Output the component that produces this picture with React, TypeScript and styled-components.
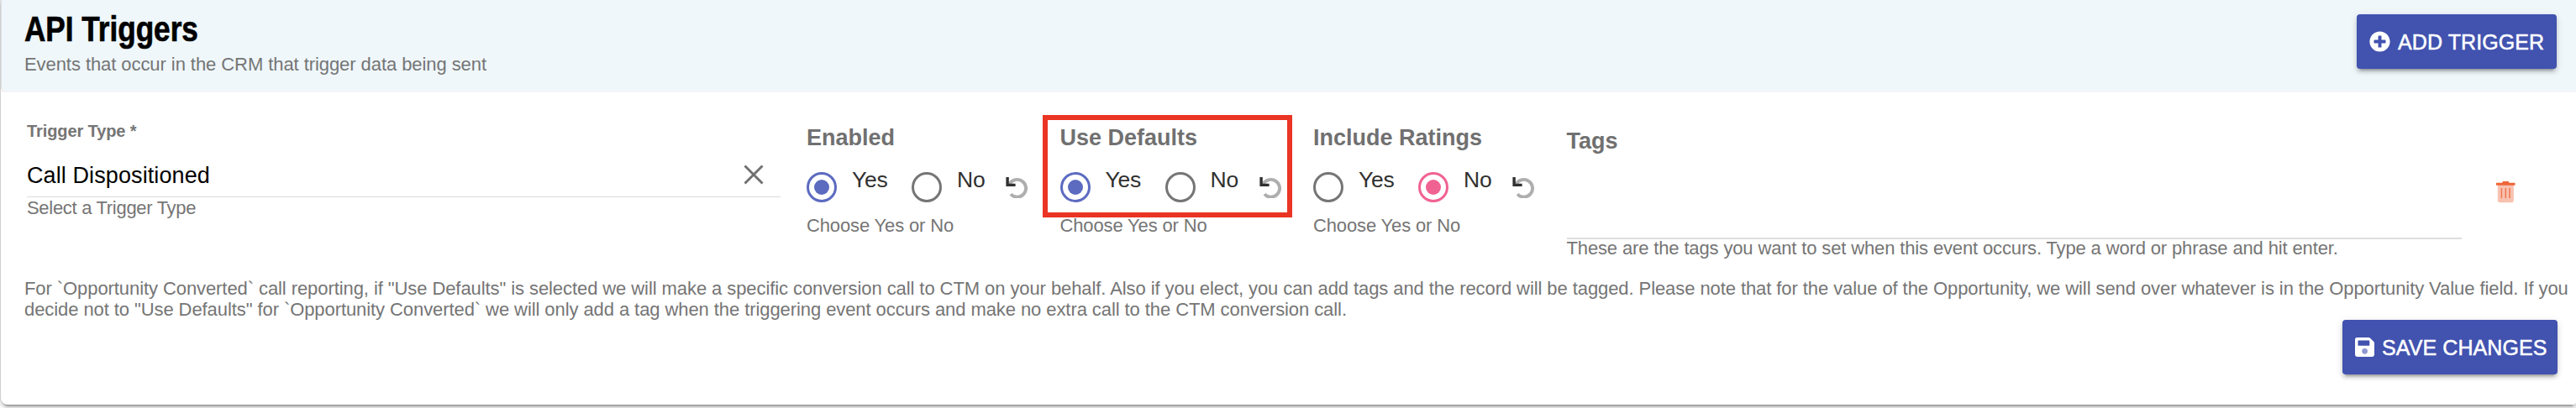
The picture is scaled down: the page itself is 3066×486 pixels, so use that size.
import React from "react";
import styled, { createGlobalStyle } from "styled-components";
import { FaPlusCircle } from "react-icons/fa";

const GlobalStyle = createGlobalStyle`
  *, *::before, *::after { box-sizing: border-box; }
  body {
    margin: 0;
    background: #fff;
    font-family: "Liberation Sans", Arial, sans-serif;
    color: #212121;
    overflow: hidden;
  }
`;

const raised = `
  0 6px 2px -4px rgba(0, 0, 0, 0.2),
  0 4px 4px 0 rgba(0, 0, 0, 0.14),
  0 2px 10px 0 rgba(0, 0, 0, 0.12)`;

const Page = styled.main`
  height: 486px;
  overflow: hidden;
  padding-left: 1px;
`;

const Card = styled.section`
  height: 482px;
  background: #fff;
  border-radius: 0 0 3px 8px;
  box-shadow: ${raised}, 0 0 0 1px rgba(0, 0, 0, 0.09);
`;

const Header = styled.header`
  height: 110px;
  margin-left: 1px;
  padding: 0 23px 0 27px;
  display: flex;
  justify-content: space-between;
  align-items: flex-start;
  background: #eff7fb;
  border-bottom: 2px solid #f7f5f9;
  border-bottom-left-radius: 6px;
  box-shadow: -1px 0 0 #dedee0;
`;

const Title = styled.h1`
  margin: 11px 0 0;
  font-size: 42px;
  line-height: 48px;
  font-weight: 700;
  color: #000;
  -webkit-text-stroke: 0.7px #000;
  transform: scaleX(0.836);
  transform-origin: left center;
`;

const Subtitle = styled.p`
  margin: 5px 0 0;
  font-size: 22px;
  line-height: 25px;
  letter-spacing: -0.07px;
  color: #757575;
`;

const Button = styled.button<{ $width: number }>`
  width: ${(p) => p.$width}px;
  height: 65px;
  padding: 0 0 0 14.5px;
  display: flex;
  align-items: center;
  gap: 9.5px;
  border: 0;
  border-radius: 4px;
  background: #4152af;
  color: #fff;
  font: 400 25px/30px "Liberation Sans", Arial, sans-serif;
  letter-spacing: 0.1px;
  white-space: nowrap;
  -webkit-text-stroke: 0.5px #fff;
  box-shadow: ${raised};

  svg { flex: none; }
  span { padding-top: 1px; }
`;

const AddButton = styled(Button)`
  margin-top: 17px;
`;

const Fields = styled.div`
  height: 221px;
  display: flex;
  align-items: flex-start;
  padding-left: 31px;
`;

const TriggerField = styled.div`
  width: 897px;
  margin: 34px 31px 0 0;
`;

const SmallLabel = styled.div`
  font-size: 20px;
  line-height: 24px;
  font-weight: 700;
  letter-spacing: -0.1px;
  color: #757575;
`;

const SelectBox = styled.div`
  height: 42px;
  margin-top: 25px;
  padding-right: 20px;
  display: flex;
  justify-content: space-between;
  border-bottom: 1px solid #dcdcdc;
  font-size: 27px;
  line-height: 32px;
  letter-spacing: 0.1px;
  color: #000;

  svg { margin-top: 3px; }
`;

const Helper = styled.div<{ $tight?: number }>`
  font-size: 22px;
  line-height: 25px;
  letter-spacing: ${(p) => p.$tight ?? -0.14}px;
  color: #757575;
  white-space: nowrap;
`;

const RadioField = styled.div`
  position: relative;
  width: 301.5px;
  margin-top: 38px;
`;

const FieldLabel = styled.div`
  font-size: 27px;
  line-height: 32px;
  font-weight: 700;
  color: #707070;
`;

const RadioRow = styled.div`
  height: 58px;
  margin-top: 18px;
  display: flex;
  align-items: flex-start;
`;

const Option = styled.label`
  width: 125px;
  display: flex;
  gap: 18px;
  font-size: 26.5px;
  line-height: 32px;
  letter-spacing: -0.2px;
  color: #303030;
`;

const Radio = styled.span<{ $color: string; $on: boolean }>`
  width: 36px;
  height: 36px;
  margin-top: 7px;
  flex: none;
  display: grid;
  place-items: center;
  border: 3.5px solid ${(p) => (p.$on ? p.$color : "#757575")};
  border-radius: 50%;

  &::after {
    content: "";
    width: 18px;
    height: 18px;
    border-radius: 50%;
    background: ${(p) => (p.$on ? p.$color : "transparent")};
  }
`;

const UndoIcon = styled.svg`
  margin: 13px 0 0 -13px;
`;

const Highlight = styled.div`
  position: absolute;
  left: -21px;
  top: -11px;
  width: 297px;
  height: 122px;
  border: 6px solid #ea3424;
`;

const TagsField = styled.div`
  width: 1065px;
  margin-top: 42px;
`;

const TagsInput = styled.div`
  height: 101px;
  border-bottom: 2px solid #dedede;
`;

const TagsHelper = styled(Helper)`
  margin-top: -2px;
`;

const TrashIcon = styled.svg`
  margin: 106px 0 0 41px;
`;

const Note = styled.p`
  margin: 0 0 0 28px;
  font-size: 22px;
  line-height: 25px;
  letter-spacing: -0.08px;
  color: #757575;
  white-space: nowrap;
`;

const Footer = styled.footer`
  display: flex;
  justify-content: flex-end;
  padding-right: 22px;
`;

function Undo() {
  return (
    <UndoIcon width="26" height="25" viewBox="0 0 26 25">
      <path d="M4.6 8.2 A10.4 10.4 0 1 1 6 20.3" fill="none" stroke="#aeaeae" strokeWidth="3.9" />
      <path d="M0.4 0H3.8V7.8H11.6V11H0.4Z" fill="#303030" />
    </UndoIcon>
  );
}

function SaveIcon() {
  return (
    <svg width="23" height="23" viewBox="0 0 448 448">
      <path
        d="M434 98 350 14A48 48 0 0 0 316 0H48A48 48 0 0 0 0 48V400A48 48 0 0 0 48 448H400A48 48 0 0 0 448 400V132A48 48 0 0 0 434 98Z"
        fill="#fff"
      />
      <rect x="68" y="66" width="268" height="126" rx="14" fill="#4152af" />
      <circle cx="226" cy="318" r="66" fill="#8f98d2" />
    </svg>
  );
}

type YesNoProps = { label: string; value: "Yes" | "No"; color: string; highlighted?: boolean };

function YesNo({ label, value, color, highlighted }: YesNoProps) {
  return (
    <RadioField>
      <FieldLabel>{label}</FieldLabel>
      <RadioRow>
        {["Yes", "No"].map((name) => (
          <Option key={name}>
            <Radio $color={color} $on={value === name} />
            {name}
          </Option>
        ))}
        <Undo />
      </RadioRow>
      <Helper>Choose Yes or No</Helper>
      {highlighted && <Highlight />}
    </RadioField>
  );
}

export default function App() {
  return (
    <Page>
      <GlobalStyle />
      <Card>
        <Header>
          <div>
            <Title>API Triggers</Title>
            <Subtitle>Events that occur in the CRM that trigger data being sent</Subtitle>
          </div>
          <AddButton $width={238}>
            <FaPlusCircle size={25} />
            <span>ADD TRIGGER</span>
          </AddButton>
        </Header>
        <Fields>
          <TriggerField>
            <SmallLabel>Trigger Type *</SmallLabel>
            <SelectBox>
              Call Dispositioned
              <svg width="24" height="24" viewBox="0 0 24 24">
                <path d="M1.5 1.5 22.5 22.5M22.5 1.5 1.5 22.5" stroke="#707070" strokeWidth="2.9" />
              </svg>
            </SelectBox>
            <Helper $tight={-0.3}>Select a Trigger Type</Helper>
          </TriggerField>
          <YesNo label="Enabled" value="Yes" color="#5c6bc0" />
          <YesNo label="Use Defaults" value="Yes" color="#5c6bc0" highlighted />
          <YesNo label="Include Ratings" value="No" color="#f06292" />
          <TagsField>
            <FieldLabel>Tags</FieldLabel>
            <TagsInput />
            <TagsHelper>
              These are the tags you want to set when this event occurs. Type a word or phrase and hit enter.
            </TagsHelper>
          </TagsField>
          <TrashIcon width="23" height="26" viewBox="0 0 23 26">
            <path d="M1.8 4H20.8V23A2.5 2.5 0 0 1 18.3 25.3H4.3A2.5 2.5 0 0 1 1.8 23Z" fill="#f8c1b0" />
            <path d="M6.4 8V20M11.3 8V20M16 8V20" stroke="#ee7850" strokeWidth="1.5" />
            <path d="M0 1.7H7L8 0H14.5L15.5 1.7H22.5V4.7H0Z" fill="#ed6537" />
          </TrashIcon>
        </Fields>
        <Note>
          For `Opportunity Converted` call reporting, if "Use Defaults" is selected we will make a specific conversion
          call to CTM on your behalf. Also if you elect, you can add tags and the record will be tagged. Please note
          that for the value of the Opportunity, we will send over whatever is in the Opportunity Value field. If you
          <br />
          decide not to "Use Defaults" for `Opportunity Converted` we will only add a tag when the triggering event
          occurs and make no extra call to the CTM conversion call.
        </Note>
        <Footer>
          <Button $width={256}>
            <SaveIcon />
            <span>SAVE CHANGES</span>
          </Button>
        </Footer>
      </Card>
    </Page>
  );
}
